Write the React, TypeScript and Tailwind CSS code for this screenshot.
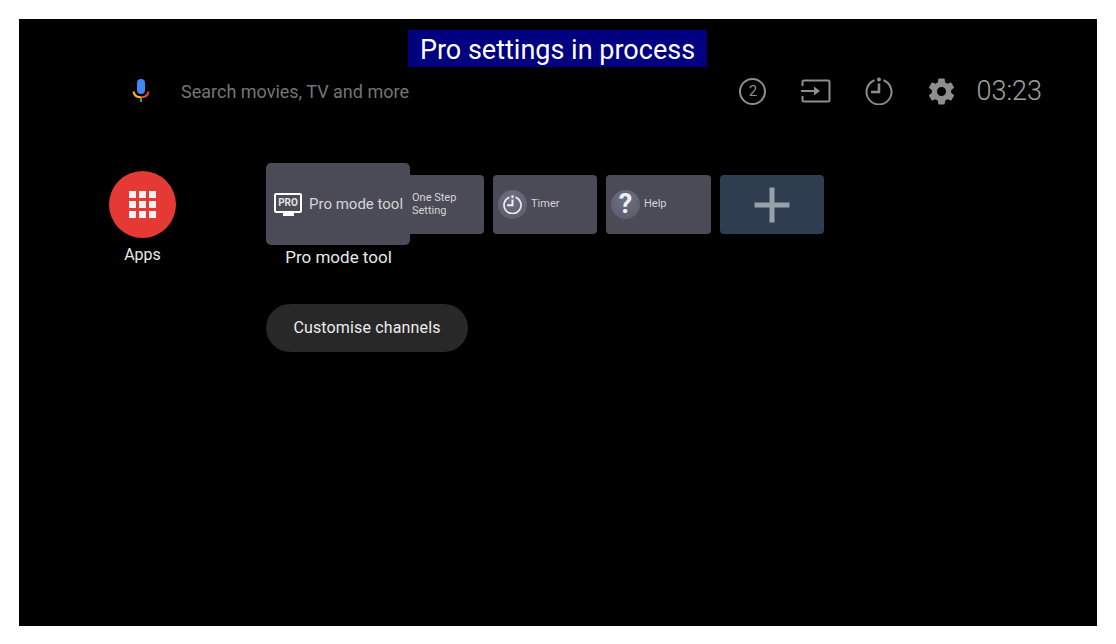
function MicIcon() {
  return (
    <svg width="20" height="26" viewBox="0 0 20 26" fill="none">
      <rect x="6" y="1" width="8" height="15" rx="4" fill="#4285f4" />
      <path d="M2.500 13.500c.6 3.600 3.600 5.800 7.500 5.800" stroke="#fbbc05" strokeWidth="2" />
      <path d="M10 19.300c3.900 0 6.900-2.200 7.500-5.800" stroke="#ea4335" strokeWidth="2" />
      <rect x="9" y="20" width="2" height="4" fill="#34a853" />
    </svg>
  );
}

function InputIcon() {
  return (
    <svg width="30" height="24" viewBox="0 0 30 24" fill="none" stroke="#8e8e8e" strokeWidth="2">
      <path d="M1.500 7V3a1.500 1.500 0 0 1 1.500-1.500h24a1.500 1.500 0 0 1 1.500 1.500v18a1.500 1.500 0 0 1-1.500 1.500H3a1.500 1.500 0 0 1-1.500-1.500v-4" />
      <path d="M0 12h17" />
      <path d="M13 7.500v9l6-4.500z" fill="#8e8e8e" stroke="none" />
    </svg>
  );
}

function TimerIcon({ size, color, width }: { size: number; color: string; width: number }) {
  return (
    <svg width={size} height={size} viewBox="0 0 28 28" fill="none" stroke={color} strokeWidth={width}>
      <path d="M9.500 3.300a12.500 12.500 0 1 0 9 0" />
      <circle cx="14" cy="2.500" r="2" fill={color} stroke="none" />
      <path d="M14 6.500V15H6" strokeWidth={width + 0.5} />
    </svg>
  );
}

function GearIcon() {
  return (
    <svg width="31" height="31" viewBox="0 0 24 24" fill="#8e8e8e">
      <path d="M19.43 12.98c.04-.32.07-.64.07-.98s-.03-.66-.07-.98l2.110-1.650c.19-.15.24-.42.12-.64l-2-3.460c-.12-.22-.39-.3-.61-.22l-2.490 1c-.52-.4-1.080-.73-1.690-.98l-.38-2.650C14.460 2.180 14.250 2 14 2h-4c-.25 0-.46.18-.49.42l-.38 2.650c-.61.25-1.170.59-1.690.98l-2.490-1c-.23-.09-.49 0-.61.22l-2 3.460c-.13.22-.07.49.12.64l2.110 1.650c-.04.32-.07.65-.07.98s.03.66.07.98l-2.110 1.650c-.19.15-.24.42-.12.64l2 3.460c.12.22.39.3.61.22l2.490-1c.52.4 1.080.73 1.690.98l.38 2.650c.03.24.24.42.49.42h4c.25 0 .46-.18.49-.42l.38-2.650c.61-.25 1.170-.59 1.690-.98l2.490 1c.23.09.49 0 .61-.22l2-3.460c.12-.22.07-.49-.12-.64l-2.110-1.650zM12 15.500c-1.930 0-3.500-1.570-3.500-3.500s1.570-3.500 3.500-3.500 3.500 1.570 3.500 3.500-1.570 3.500-3.500 3.500z" />
    </svg>
  );
}

function AppsGrid() {
  return (
    <div className="grid grid-cols-3 gap-[3px]">
      {Array.from({ length: 9 }).map((_, i) => (
        <div key={i} className="w-[7px] h-[7px] bg-[#f2f2f2]" />
      ))}
    </div>
  );
}

function ProIcon() {
  return (
    <div className="flex flex-col items-center w-[28px]">
      <div className="w-[28px] h-[20px] border-[2.5px] border-white rounded-[2px] flex items-center justify-center">
        <span className="text-[10px] leading-none font-bold text-[#e2e2e2]">PRO</span>
      </div>
      <div className="w-[11px] h-[3px] bg-white" />
    </div>
  );
}

function RoundBadge({ children }: { children: React.ReactNode }) {
  return (
    <div className="w-[29px] h-[29px] rounded-full bg-[radial-gradient(circle_at_50%_30%,#6f7183,#585a6b)] flex items-center justify-center">
      {children}
    </div>
  );
}

export default function App() {
  return (
    <div className="w-[1116px] h-[644px] bg-white p-[19px] font-['Roboto',sans-serif]">
      <div className="relative w-[1078px] h-[607px] bg-black pt-[53px]">
        <div className="absolute left-[389px] top-[11px] w-[299px] h-[37px] bg-[#000080] text-white text-[27px] leading-[41px] text-center">
          Pro settings in process
        </div>

        <div className="flex items-center justify-between h-[38px] pl-[112px] pr-[55px]">
          <div className="flex items-center gap-[30px]">
            <MicIcon />
            <span className="text-[18px] text-[#757575]">Search movies, TV and more</span>
          </div>
          <div className="flex items-center text-[#8e8e8e]">
            <div className="w-[63px] flex justify-center">
              <div className="w-[27px] h-[27px] rounded-full border-2 border-[#8e8e8e] flex items-center justify-center text-[15px] leading-none">
                2
              </div>
            </div>
            <div className="w-[63px] flex justify-center">
              <InputIcon />
            </div>
            <div className="w-[63px] flex justify-center">
              <TimerIcon size={28} color="#8e8e8e" width={2} />
            </div>
            <div className="w-[63px] flex justify-center">
              <GearIcon />
            </div>
            <span className="ml-[3px] text-[27px] font-light leading-none text-[#a0a0a0]">03:23</span>
          </div>
        </div>

        <div className="flex items-start pl-[90px] mt-[53px]">
          <div className="flex flex-col items-center w-[67px] pt-[8px]">
            <div className="w-[67px] h-[67px] rounded-full bg-[#e53935] flex items-center justify-center">
              <AppsGrid />
            </div>
            <span className="mt-[5px] text-[16px] text-[#e8e8e8]">Apps</span>
          </div>

          <div className="ml-[90px] flex flex-col">
            <div className="flex items-start">
              <div className="flex flex-col items-center">
                <div className="w-[144px] h-[82px] rounded-[5px] bg-[#4a4b57] flex items-center pl-[8px] gap-[7px]">
                  <ProIcon />
                  <span className="text-[15px] text-[#d4d4d8] whitespace-nowrap">Pro mode tool</span>
                </div>
                <span className="text-[17px] text-[#e8e8e8] ml-[1px]">Pro mode tool</span>
              </div>
              <div className="mt-[12px] w-[74px] h-[59px] rounded-r-[4px] bg-[#4a4b57] flex items-center pl-[2px] pb-[2px]">
                <span className="text-[11px] leading-[13px] text-[#d4d4d8]">
                  One Step
                  <br />
                  Setting
                </span>
              </div>
              <div className="mt-[12px] ml-[9px] w-[104px] h-[59px] rounded-[4px] bg-[#4a4b57] flex items-center pl-[5px] gap-[4px]">
                <RoundBadge>
                  <TimerIcon size={19} color="#eeeeee" width={2.5} />
                </RoundBadge>
                <span className="text-[11px] text-[#d4d4d8]">Timer</span>
              </div>
              <div className="mt-[12px] ml-[9px] w-[105px] h-[59px] rounded-[4px] bg-[#4a4b57] flex items-center pl-[5px] gap-[4px]">
                <RoundBadge>
                  <span className="text-[27px] leading-none font-bold text-[#f0f0f0]">?</span>
                </RoundBadge>
                <span className="text-[11px] text-[#d4d4d8]">Help</span>
              </div>
              <div className="mt-[12px] ml-[9px] w-[104px] h-[59px] rounded-[4px] bg-[#2e3d4f] flex items-center justify-center">
                <svg width="36" height="36" viewBox="0 0 36 36" fill="#96a1aa">
                  <rect x="15.500" y="0.500" width="5" height="35" />
                  <rect x="0.500" y="15.500" width="35" height="5" />
                </svg>
              </div>
            </div>

            <div className="mt-[33px] w-[202px] h-[48px] rounded-full bg-[#282828] flex items-center justify-center">
              <span className="text-[16px] font-normal tracking-[0.15px] text-[#ececec]">Customise channels</span>
            </div>
          </div>
        </div>
      </div>
    </div>
  );
}
